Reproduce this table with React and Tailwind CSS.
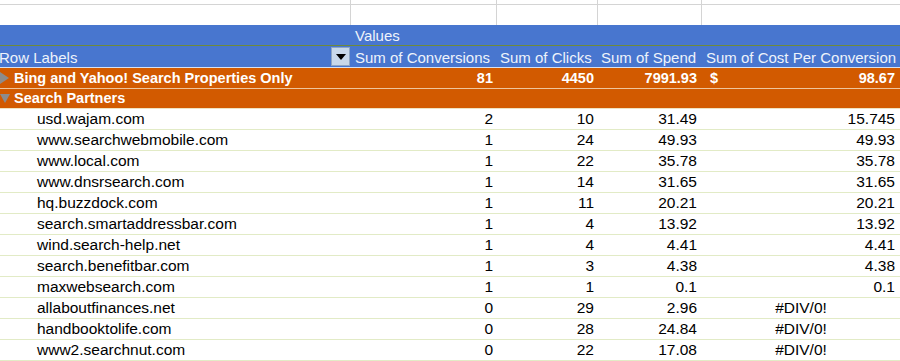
import React from 'react';

const cols = 'grid grid-cols-[351px_146px_101px_104px_198px]';

const rows = [
  ['usd.wajam.com', '2', '10', '31.49', '15.745'],
  ['www.searchwebmobile.com', '1', '24', '49.93', '49.93'],
  ['www.local.com', '1', '22', '35.78', '35.78'],
  ['www.dnsrsearch.com', '1', '14', '31.65', '31.65'],
  ['hq.buzzdock.com', '1', '11', '20.21', '20.21'],
  ['search.smartaddressbar.com', '1', '4', '13.92', '13.92'],
  ['wind.search-help.net', '1', '4', '4.41', '4.41'],
  ['search.benefitbar.com', '1', '3', '4.38', '4.38'],
  ['maxwebsearch.com', '1', '1', '0.1', '0.1'],
  ['allaboutfinances.net', '0', '29', '2.96', '#DIV/0!'],
  ['handbooktolife.com', '0', '28', '24.84', '#DIV/0!'],
  ['www2.searchnut.com', '0', '22', '17.08', '#DIV/0!'],
];

const DataRow = ({ r }) => (
  <div className={`${cols} h-[21px] border-b border-[#e2ebc6] items-center text-black text-[15.5px]`}>
    <div className="pl-[37px]">{r[0]}</div>
    <div className="text-right pr-[4px]">{r[1]}</div>
    <div className="text-right pr-[4px]">{r[2]}</div>
    <div className="text-right pr-[5px]">{r[3]}</div>
    {r[4].startsWith('#') ? (
      <div className="text-center">{r[4]}</div>
    ) : (
      <div className="text-right pr-[5px]">{r[4]}</div>
    )}
  </div>
);

export default function App() {
  return (
    <div className="w-[900px] h-[361px] overflow-hidden bg-white text-[15px] leading-none font-['Liberation_Sans',Arial,sans-serif]">
      {/* empty sheet rows above the pivot */}
      <div className={`${cols} h-[5px] border-b border-[#d4d4d4]`}>
        <div className="border-r border-[#d4d4d4]" />
        <div className="border-r border-[#d4d4d4]" />
        <div className="border-r border-[#d4d4d4]" />
        <div className="border-r border-[#d4d4d4]" />
        <div />
      </div>
      <div className={`${cols} h-[20px]`}>
        <div className="border-r border-[#d4d4d4]" />
        <div className="border-r border-[#d4d4d4]" />
        <div className="border-r border-[#d4d4d4]" />
        <div className="border-r border-[#d4d4d4]" />
        <div />
      </div>

      {/* pivot header */}
      <div className="bg-[#4876cf] text-[#eef3fb]">
        <div className={`${cols} h-[21px] items-center border-b border-[#6f8a3a]`}>
          <div />
          <div className="pl-[4px] pt-[1px]">Values</div>
        </div>
        <div className={`${cols} h-[22px] items-center border-b border-[#d8e2f2]`}>
          <div className="flex items-center justify-between pr-[1px]">
            <span className="-ml-[1px] pt-[1px]">Row Labels</span>
            <span className="w-[19px] h-[19px] bg-[#c8d8ea] border border-[#8ea6c4] flex items-center justify-center">
              <span className="w-0 h-0 border-l-[5px] border-r-[5px] border-t-[6px] border-l-transparent border-r-transparent border-t-black" />
            </span>
          </div>
          <div className="pl-[4px] pt-[1px] whitespace-nowrap">Sum of Conversions</div>
          <div className="pl-[3px] pt-[1px] whitespace-nowrap">Sum of Clicks</div>
          <div className="pl-[3px] pt-[1px] whitespace-nowrap">Sum of Spend</div>
          <div className="pl-[4px] pt-[1px] whitespace-nowrap">Sum of Cost Per Conversion</div>
        </div>
      </div>

      {/* group rows */}
      <div className={`${cols} h-[21px] items-center bg-[#d25a00] text-white font-bold text-[14.5px] border-b border-[#efc59c]`}>
        <div className="flex items-center whitespace-nowrap">
          <span className="w-0 h-0 border-t-[6px] border-b-[6px] border-l-[9px] border-t-transparent border-b-transparent border-l-[#8c8c8c] mr-[5px]" />
          <span>Bing and Yahoo! Search Properties Only</span>
        </div>
        <div className="text-right pr-[4px]">81</div>
        <div className="text-right pr-[4px]">4450</div>
        <div className="text-right pr-[5px]">7991.93</div>
        <div className="flex justify-between pl-[8px] pr-[5px]">
          <span>$</span>
          <span>98.67</span>
        </div>
      </div>
      <div className={`${cols} h-[20px] items-center bg-[#d25a00] text-white font-bold text-[14.5px] border-b border-[#efe3c0]`}>
        <div className="flex items-center whitespace-nowrap">
          <span className="w-0 h-0 border-l-[5px] border-r-[5px] border-t-[9px] border-l-transparent border-r-transparent border-t-[#8c8c8c] mr-[4px]" />
          <span>Search Partners</span>
        </div>
      </div>

      {rows.map(r => (
        <DataRow key={r[0]} r={r} />
      ))}
    </div>
  );
}
